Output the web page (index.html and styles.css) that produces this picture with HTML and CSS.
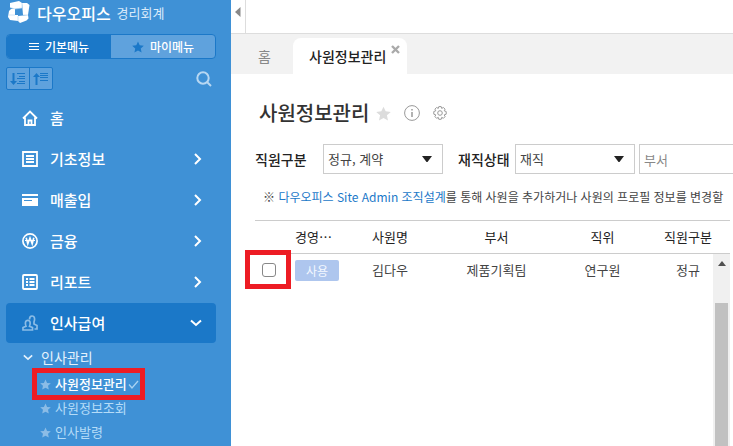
FILE: index.html
```html
<!DOCTYPE html>
<html lang="ko">
<head>
<meta charset="utf-8">
<meta name="viewport" content="width=device-width, initial-scale=1">
<title>사원정보관리</title>
<link rel="stylesheet" href="styles.css">
</head>
<body>
<svg class="defs" aria-hidden="true">
  <symbol id="star" viewBox="0 0 14 14"><path d="M7 .6 9 5l4.800.5-3.600 3.200 1 4.800L7 11.100l-4.200 2.400 1-4.800L.2 5.500 5 5z"/></symbol>
  <symbol id="chevron" viewBox="0 0 8 12"><path d="M1 1l5 5-5 5" fill="none" stroke="currentColor" stroke-width="2"/></symbol>
  <symbol id="chevron-down" viewBox="0 0 12 8"><path d="M1 1.500l5 4.500 5-4.500" fill="none" stroke="currentColor" stroke-width="2"/></symbol>
  <symbol id="caret" viewBox="0 0 10 6"><path d="M0 0h10L5.500 6h-1z"/></symbol>
</svg>
<div class="app">
  <aside class="sidebar">
    <a class="brand" href="#">
      <svg class="logo" width="22" height="22" viewBox="0 0 22 22"><g fill="#fff"><path d="M2 2 11 0l3 2v5l-8 1-4-1.500z"/><path d="M14 2h5l2.500 2L20 14h-5z"/><path d="M10 15l10-1 .5 3.500-2 2-6.500 2.500-2-2z"/><path d="M1 10l2-2h4v6h3v6l-8-1-2-3z"/></g><path d="M2 6.500 7 8l7-1M14 2v5M15 14l5 0M10 15v5M7 14H1" fill="none" stroke="#b4d5f1" stroke-width=".6"/></svg>
      <span class="brand-name">다우오피스</span><span class="brand-product">경리회계</span>
    </a>
    <div class="menu-switch">
      <button class="switch on" type="button"><svg width="10" height="8" viewBox="0 0 10 8"><path d="M0 .5h10M0 3.500h10M0 6.500h10" stroke="#fff"/></svg>기본메뉴</button>
      <button class="switch" type="button"><svg class="blue-star" width="12" height="12"><use href="#star"/></svg>마이메뉴</button>
    </div>
    <div class="tools">
      <div class="sorts">
        <button type="button" aria-label="펼치기"><svg width="16" height="14" viewBox="0 0 16 14" fill="none" stroke="#1b78c8"><path d="M3.500 1v10" stroke-width="2"/><path d="M0 9h7l-3.500 4z" fill="#1b78c8" stroke="none"/><path d="M7 1.500h8M9 4.500h6M7 6.500h8M9 9.500h6M7 11.500h8"/></svg></button>
        <button type="button" aria-label="접기"><svg width="16" height="14" viewBox="0 0 16 14" fill="none" stroke="#1b78c8"><path d="M3.500 3v10" stroke-width="2"/><path d="M0 5h7L3.500 1z" fill="#1b78c8" stroke="none"/><path d="M7 1.500h8M7 3.500h8M7 5.500h8M7 8.500h8"/></svg></button>
      </div>
      <button class="search" type="button" aria-label="검색"><svg width="16" height="16" viewBox="0 0 16 16" fill="none" stroke="#b7d7f2" stroke-width="2"><circle cx="7" cy="7" r="5.700"/><path d="M11 11l4 4"/></svg></button>
    </div>
    <nav class="nav">
      <a href="#"><svg class="ico" viewBox="0 0 16 16"><path d="M1 8.500 8 1.500l7 7M3 7.500V15h10V7.500M6.500 15v-4.500h3V15" fill="none" stroke="currentColor" stroke-width="1.800"/></svg><span>홈</span></a>
      <a href="#"><svg class="ico" viewBox="0 0 16 16"><path d="M1 1h14v14H1zM4 5h8M4 8h8M4 11h8" fill="none" stroke="currentColor" stroke-width="1.800"/></svg><span>기초정보</span><svg class="arrow" width="8" height="12"><use href="#chevron"/></svg></a>
      <a href="#"><svg class="ico" viewBox="0 0 16 16"><path d="M0 2h16v2H0zM0 6h16v8H0z" fill="currentColor"/><path d="M2 8.500h8" stroke="#3f91d6"/></svg><span>매출입</span><svg class="arrow" width="8" height="12"><use href="#chevron"/></svg></a>
      <a href="#"><svg class="ico" viewBox="0 0 16 16" fill="none" stroke="currentColor"><circle cx="8" cy="8" r="7.100" stroke-width="1.700"/><path d="M4.200 4.800l1.600 6L8 5l2.200 5.800 1.600-6" stroke-width="1.600"/><path d="M3 7.500h10"/></svg><span>금융</span><svg class="arrow" width="8" height="12"><use href="#chevron"/></svg></a>
      <a href="#"><svg class="ico" viewBox="0 0 16 16" fill="none" stroke="currentColor"><rect x="1" y="1" width="14" height="14" rx="1" stroke-width="1.800"/><path d="M4 5h2M7.500 5h5M4 8h2M7.500 8h5M4 11h2M7.500 11h5" stroke-width="1.800"/></svg><span>리포트</span><svg class="arrow" width="8" height="12"><use href="#chevron"/></svg></a>
      <a class="open" href="#"><svg class="ico people" viewBox="0 0 16 16" fill="none" stroke="currentColor" stroke-width="1.700"><path d="M1 15v-2.500l3-1.200c-1-2.500-1-6 1.800-6s2.800 3.500 1.700 6l3 1.200V15z"/><path d="M7.500 4.500C7.500 2 8.500 1 10 1c3 0 3 3.500 2 6v2l3 1.500V14h-2.500"/></svg><span>인사급여</span><svg class="arrow" width="12" height="8"><use href="#chevron-down"/></svg></a>
    </nav>
    <div class="sub">
      <a class="sub-head" href="#"><svg width="10" height="7"><use href="#chevron-down"/></svg>인사관리</a>
      <a class="current" href="#"><svg width="11" height="11"><use href="#star"/></svg>사원정보관리<svg class="check" width="11" height="9" viewBox="0 0 11 9"><path d="M1 4.500l3 3.500L10 1" fill="none" stroke="#a9d2f1" stroke-width="1.300"/></svg><i class="mark"></i></a>
      <a href="#"><svg width="11" height="11"><use href="#star"/></svg>사원정보조회</a>
      <a href="#"><svg width="11" height="11"><use href="#star"/></svg>인사발령</a>
    </div>
  </aside>
  <main class="main">
    <div class="topbar"><button class="fold" type="button" aria-label="메뉴 접기"><svg width="6" height="10" viewBox="0 0 6 10"><path d="M5.500 0v10L0 5z" fill="#888"/></svg></button></div>
    <div class="tabs">
      <a class="tab-home" href="#">홈</a>
      <div class="tab"><a href="#">사원정보관리</a><button class="close" type="button" aria-label="닫기"><svg width="9" height="9" viewBox="0 0 9 9"><path d="M1 1l7 7M8 1 1 8" stroke="#aaa" stroke-width="2.400"/></svg></button></div>
    </div>
    <section class="page">
      <header class="title">
        <h1>사원정보관리</h1>
        <svg width="15" height="15" fill="#dcdcdc"><use href="#star"/></svg>
        <svg class="info" width="16" height="16" viewBox="0 0 16 16" fill="none" stroke="#999"><circle cx="8" cy="8" r="7.400"/><path d="M8 4v1.600M8 7v5" stroke-width="1.500"/></svg>
        <svg class="gear" width="14" height="14" viewBox="0 0 14 14" fill="none" stroke="#999"><path d="M5.800.6h2.400l.5 1.800 1.700-.9 1.700 1.700-.9 1.600 2 .7v2.700l-2 .7.900 1.700-1.700 1.700-1.700-.9-.5 1.900H5.800l-.5-1.900-1.700.9-1.700-1.700.9-1.700-2-.7V5.500l2-.7-.9-1.600 1.700-1.700 1.700.9z"/><circle cx="7" cy="7" r="2.300"/></svg>
      </header>
      <form class="filters">
        <label for="kind">직원구분</label>
        <span class="pick"><select id="kind"><option>정규, 계약</option></select><svg width="10" height="6"><use href="#caret"/></svg></span>
        <label class="second" for="state">재직상태</label>
        <span class="pick"><select id="state"><option>재직</option></select><svg width="10" height="6"><use href="#caret"/></svg></span>
        <input class="dept" type="text" placeholder="부서" aria-label="부서">
      </form>
      <p class="note">※ <a href="#">다우오피스 Site Admin 조직설계</a>를 통해 사원을 추가하거나 사원의 프로필 정보를 변경할</p>
      <div class="grid">
        <table>
          <colgroup><col class="c-check"><col class="c-use"><col class="c-name"><col class="c-dept"><col class="c-rank"><col></colgroup>
          <thead><tr><th></th><th>경영⋯</th><th>사원명</th><th>부서</th><th>직위</th><th class="last">직원구분</th></tr></thead>
          <tbody><tr><td><label class="tick"><input type="checkbox" aria-label="김다우 선택"><i class="mark"></i></label></td><td><span class="badge">사용</span></td><td>김다우</td><td>제품기획팀</td><td>연구원</td><td class="last">정규</td></tr></tbody>
        </table>
        <div class="scroll"><svg width="8" height="5" viewBox="0 0 8 5"><path d="M4 0l4 5H0z" fill="#505050"/></svg><div class="thumb"></div></div>
      </div>
    </section>
  </main>
</div>
</body>
</html>
```
FILE: styles.css
```css
* { box-sizing: border-box; }
body { margin: 0; font: 13px/20px "Noto Sans CJK KR", sans-serif; color: #444; background: #fff; overflow: hidden; }
a { color: inherit; text-decoration: none; }
button { padding: 0; border: 0; background: none; font: inherit; color: inherit; }
svg { display: block; flex: none; }
.defs { position: absolute; width: 0; height: 0; }
.app { display: flex; height: 100vh; }

.sidebar { flex: none; width: 231px; padding: 0 15px 0 6px; background: #3f91d6; color: #fff; overflow: hidden; }
.brand { display: flex; align-items: center; height: 26px; padding-left: 2px; }
.logo { margin-bottom: 2px; }
.brand-name { margin-left: 7px; font-size: 16px; font-weight: 500; }
.brand-product { margin-left: 6px; font-size: 13px; color: #d9eafa; }
.menu-switch { display: flex; height: 25px; margin-top: 8px; border: 1px solid #1b78c8; border-radius: 4px; background: #5fa2dd; overflow: hidden; }
.switch { flex: 1; display: flex; align-items: center; justify-content: center; gap: 6px; font-size: 12px; font-weight: 500; }
.switch.on { background: #1b78c8; }
.blue-star { fill: #1b78c8; }
.tools { display: flex; align-items: center; justify-content: space-between; height: 23px; margin-top: 8px; }
.sorts { display: flex; border: 1px solid #1b78c8; border-radius: 2px; background: #5fa2dd; }
.sorts button { display: flex; align-items: center; justify-content: center; width: 22px; height: 21px; }
.sorts button + button { width: 23px; border-left: 1px solid #1b78c8; }
.search { margin-right: 4px; }
.nav { display: flex; flex-direction: column; gap: 1px; padding-top: 8px; }
.nav a { display: flex; align-items: center; height: 40px; padding: 0 14px 0 16px; border-radius: 4px; font-size: 15px; font-weight: 500; }
.nav .open { background: #1b78c8; }
.ico { width: 16px; height: 16px; margin-right: 12px; }
.people { color: #8bbce6; }
.arrow { margin-left: auto; }
.sub { padding: 2px 0 0 34px; }
.sub a { display: flex; align-items: center; position: relative; width: fit-content; height: 24px; gap: 4px; color: #b5dcf8; fill: #8bbce6; }
.sub .sub-head { height: 27px; margin-left: -17px; padding-bottom: 3px; gap: 8px; font-size: 14px; color: #e4f1fc; }
.sub .current { color: #fff; font-weight: 500; }
.sub .check { margin-left: -3px; }
.mark { position: absolute; border: 5px solid #ed1c24; pointer-events: none; }
.sub .mark { inset: -4px -6px -4px -8px; }

.main { flex: 1; min-width: 0; overflow: hidden; display: flex; flex-direction: column; }
.topbar { flex: none; height: 34px; border-bottom: 1px solid #ddd; }
.fold { display: flex; justify-content: center; width: 15px; height: 33px; padding-top: 7px; border-right: 1px solid #ddd; }
.tabs { flex: none; display: flex; align-items: flex-end; height: 40px; padding-left: 27px; background: #f2f2f2; font-size: 14px; }
.tab-home { width: 35px; height: 28px; color: #888; }
.tab { display: flex; height: 36px; padding: 8px 7px 0 16px; border-radius: 8px 8px 0 0; background: #fff; color: #222; font-weight: 500; }
.close { align-self: flex-start; margin: -1px 0 0 5px; }
.page { flex: 1; display: flex; flex-direction: column; padding: 24px 3px 0 24px; }
.title { display: flex; align-items: center; height: 30px; padding-left: 4px; }
h1 { margin: 0; font-size: 20px; font-weight: 500; line-height: 30px; color: #333; }
.title svg { margin-left: 7px; }
.title .info, .title .gear { margin-left: 13px; }
.filters { display: flex; align-items: center; height: 30px; margin-top: 16px; white-space: nowrap; }
.filters label { width: 68px; flex: none; font-size: 14px; font-weight: 500; color: #222; }
.filters .second { width: 57px; margin-left: 15px; }
.pick { position: relative; flex: none; width: 120px; }
.pick svg { position: absolute; right: 11px; top: 12px; fill: #222; pointer-events: none; }
select, .dept { width: 100%; height: 30px; margin: 0; padding: 0 4px; border: 1px solid #ccc; border-radius: 0; background: #fff; font: inherit; color: #444; appearance: none; }
.dept { flex: none; width: 120px; margin-left: 4px; }
.dept::placeholder { color: #888; }
.note { margin: 13px 0 0 8px; font-size: 12px; white-space: nowrap; }
.note a { color: #1b78c8; }
.grid { flex: 1; position: relative; margin-top: 13px; }
table { width: 100%; table-layout: fixed; border-collapse: separate; border-spacing: 0; text-align: center; }
th, td { height: 32px; padding: 0; }
th { height: 34px; border: solid #ccc; border-width: 1px 0; font-weight: 400; color: #222; }
.last { padding-right: 2px; }
.c-check { width: 28px; }
.c-use { width: 61px; }
.c-name { width: 92px; }
.c-dept { width: 121px; }
.c-rank { width: 91px; }
.tick { display: block; position: relative; width: 14px; margin: 0 auto; }
.tick input { appearance: none; display: block; width: 14px; height: 14px; margin: 0; border: 1px solid #888; border-radius: 3px; background: #fff; }
.tick .mark { inset: -13px -15px -12px -17px; }
.badge { display: block; width: 44px; height: 21px; margin: 0 0 0 auto; border-radius: 2px; background: #aec6ee; color: #f4f8ff; font-size: 12px; line-height: 21px; }
td:has(.badge) { padding-right: 5px; }
.scroll { position: absolute; top: 34px; right: 0; bottom: 0; width: 17px; padding: 7px 2px 0; background: #f0f0f0; display: flex; flex-direction: column; align-items: center; }
.thumb { flex: 1; width: 13px; margin-top: 37px; background: #c1c1c1; }
```
